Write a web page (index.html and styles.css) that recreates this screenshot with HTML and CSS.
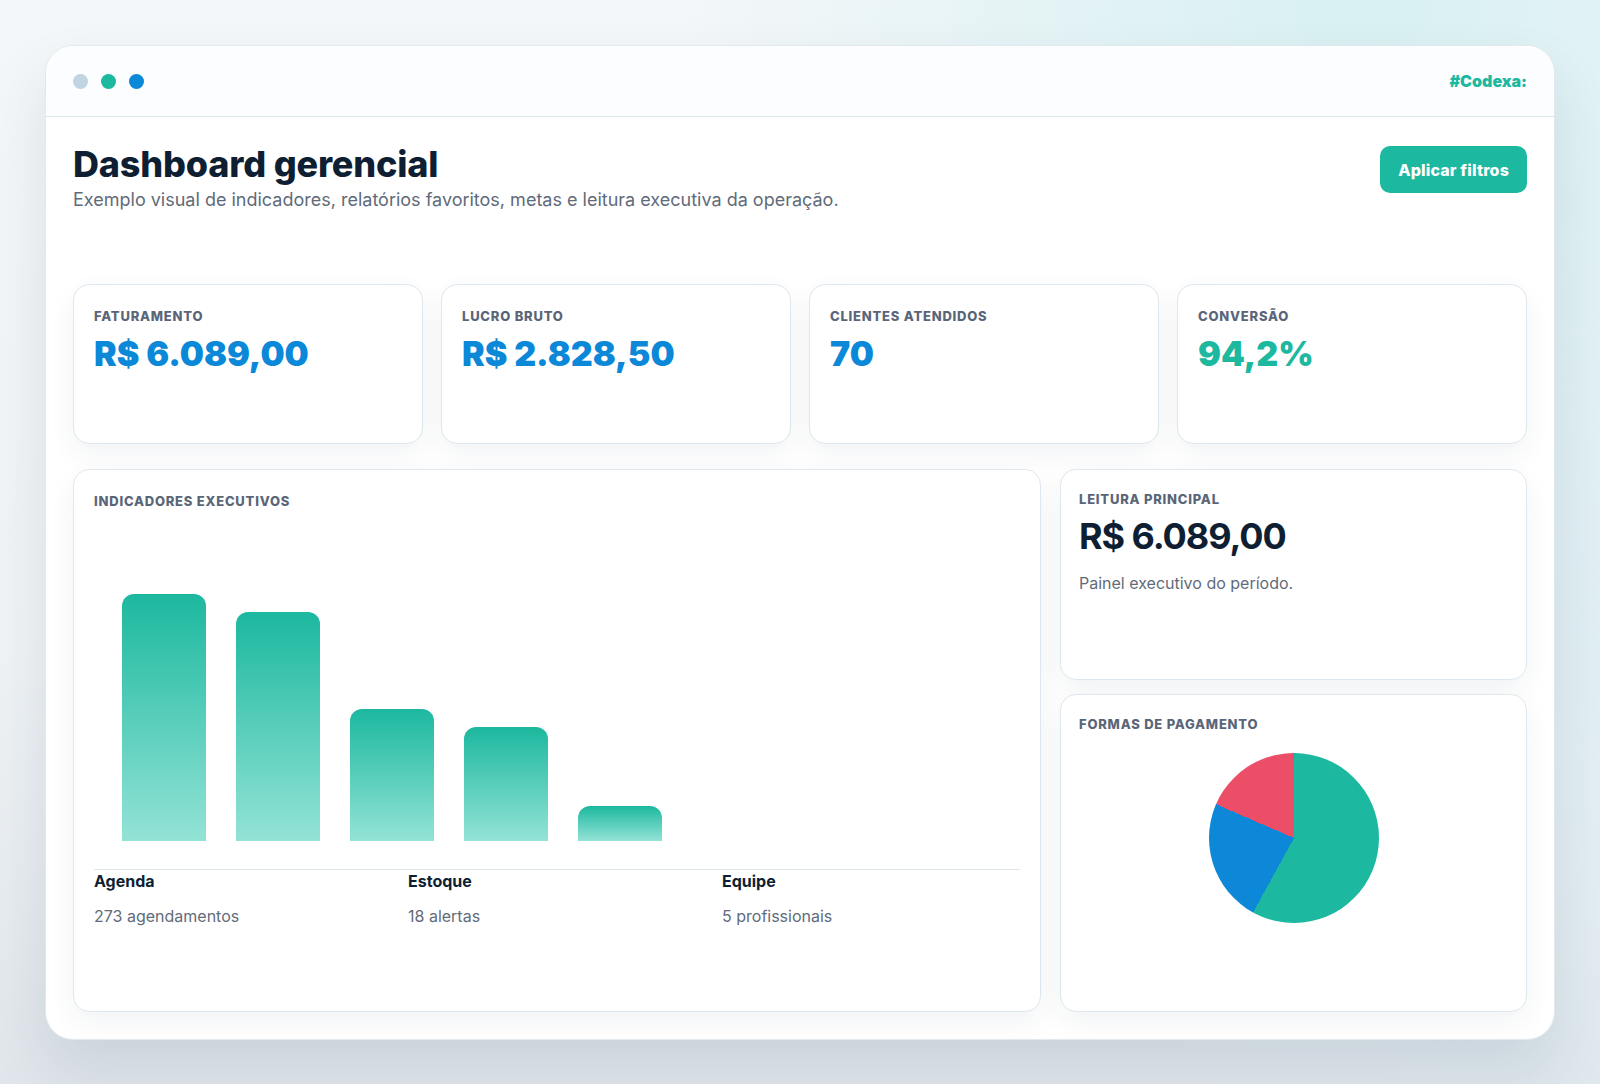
FILE: index.html
```html
<!DOCTYPE html>
<html>
  <head>
    <title>Dashboard gerencial</title>
    <link rel="stylesheet" href="styles.css">
  </head>
  <body>
    <div class="window">
      <div class="titlebar">
        <div class="dots">
          <span class="dot dot-gray"></span>
          <span class="dot dot-teal"></span>
          <span class="dot dot-blue"></span>
        </div>
        <span class="brand">#Codexa:</span>
      </div>

      <div class="content">
        <div class="page-head">
          <div>
            <h1>Dashboard gerencial</h1>
            <p class="subtitle">Exemplo visual de indicadores, relatórios favoritos, metas e leitura executiva da operação.</p>
          </div>
          <button class="btn-primary">Aplicar filtros</button>
        </div>

        <div class="kpis">
          <div class="card kpi">
            <span class="label">Faturamento</span>
            <strong class="kpi-value">R$ 6.089,00</strong>
          </div>
          <div class="card kpi">
            <span class="label">Lucro bruto</span>
            <strong class="kpi-value">R$ 2.828,50</strong>
          </div>
          <div class="card kpi">
            <span class="label">Clientes atendidos</span>
            <strong class="kpi-value">70</strong>
          </div>
          <div class="card kpi">
            <span class="label">Conversão</span>
            <strong class="kpi-value kpi-teal">94,2%</strong>
          </div>
        </div>

        <div class="main-grid">
          <div class="card chart-card">
            <span class="label">Indicadores executivos</span>
            <div class="bars">
              <div class="bar" style="height: 247px"></div>
              <div class="bar" style="height: 229px"></div>
              <div class="bar" style="height: 132px"></div>
              <div class="bar" style="height: 114px"></div>
              <div class="bar" style="height: 35px"></div>
            </div>
            <div class="summary">
              <div class="summary-item">
                <strong>Agenda</strong>
                <p>273 agendamentos</p>
              </div>
              <div class="summary-item">
                <strong>Estoque</strong>
                <p>18 alertas</p>
              </div>
              <div class="summary-item">
                <strong>Equipe</strong>
                <p>5 profissionais</p>
              </div>
            </div>
          </div>

          <div class="side">
            <div class="card side-card reading">
              <span class="label">Leitura principal</span>
              <strong class="reading-value">R$ 6.089,00</strong>
              <p class="muted">Painel executivo do período.</p>
            </div>
            <div class="card side-card payments">
              <span class="label">Formas de pagamento</span>
              <div class="pie"></div>
            </div>
          </div>
        </div>
      </div>
    </div>
  </body>
</html>
```

FILE: styles.css
```css
* {
  box-sizing: border-box;
}

body {
  margin: 0;
  padding: 45px;
  min-height: 100vh;
  font-family: Inter, "Noto Sans", sans-serif;
  color: #0f1f33;
  background:
    radial-gradient(circle at 85% 0%, rgba(206, 238, 240, 0.75), rgba(206, 238, 240, 0) 40%),
    radial-gradient(circle at 100% 60%, rgba(222, 238, 243, 0.8), rgba(222, 238, 243, 0) 35%),
    linear-gradient(180deg, #f4f7f9 0%, #eff3f6 60%, #e0e6eb 100%);
}

.window {
  background: #fff;
  border: 1px solid #e1e9ee;
  border-radius: 28px;
  overflow: hidden;
  box-shadow: 0 30px 60px rgba(20, 45, 70, 0.11);
}

.titlebar {
  height: 71px;
  display: flex;
  align-items: center;
  justify-content: space-between;
  padding: 0 27px;
  background: #fbfdfe;
  border-bottom: 1px solid #dfe8ed;
}

.dots {
  display: flex;
  gap: 13px;
}

.dot {
  width: 15px;
  height: 15px;
  border-radius: 50%;
}

.dot-gray {
  background: #c0d4e2;
}

.dot-teal {
  background: #1cb89f;
}

.dot-blue {
  background: #0b88d8;
}

.brand {
  color: #1cb89f;
  font-weight: 900;
  font-size: 16px;
}

.content {
  padding: 27px 27px 27px;
}

.page-head {
  display: flex;
  justify-content: space-between;
  align-items: flex-start;
  margin-bottom: 71px;
}

h1 {
  margin: 0;
  font-size: 36px;
  line-height: 1.15;
  font-weight: 800;
  letter-spacing: -0.005em;
  color: #0f1f33;
}

.subtitle {
  margin: 1px 0 0;
  font-size: 18px;
  line-height: 1.5;
  color: #5f6b7a;
}

.btn-primary {
  margin-top: 2px;
  height: 47px;
  padding: 0 18px;
  border: 0;
  border-radius: 10px;
  background: #1cb89f;
  color: #fff;
  font-family: inherit;
  font-size: 16px;
  font-weight: 800;
  letter-spacing: 0.01em;
}

.card {
  background: #fff;
  border: 1px solid #dfe8ee;
  border-radius: 16px;
  box-shadow: 0 10px 28px rgba(20, 45, 70, 0.06);
}

.label {
  display: block;
  font-size: 13px;
  line-height: 1.4;
  font-weight: 800;
  letter-spacing: 0.06em;
  text-transform: uppercase;
  color: #5a6678;
}

.kpis {
  display: grid;
  grid-template-columns: repeat(4, minmax(0, 1fr));
  gap: 18px;
  margin-bottom: 25px;
}

.kpi {
  height: 160px;
  padding: 22px 20px;
}

.kpi-value {
  display: block;
  margin-top: 8px;
  font-size: 34px;
  line-height: 1.2;
  font-weight: 900;
  letter-spacing: 0;
  color: #0b88d8;
}

.kpi-teal {
  color: #1cb89f;
}

.main-grid {
  display: grid;
  grid-template-columns: minmax(0, 1fr) 467px;
  gap: 19px;
}

.chart-card {
  height: 543px;
  padding: 22px 20px;
}

.bars {
  height: 330px;
  display: flex;
  align-items: flex-end;
  gap: 30px;
  padding: 0 28px;
  margin-bottom: 28px;
}

.bar {
  width: 84px;
  border-radius: 12px 12px 0 0;
  background: linear-gradient(180deg, #1cb89f 0%, #93e3d6 100%);
}

.summary {
  display: grid;
  grid-template-columns: repeat(3, minmax(0, 1fr));
  gap: 16px;
  border-top: 1px solid #dde6eb;
}

.summary-item strong {
  display: block;
  font-size: 16px;
  line-height: 1.4;
  font-weight: 700;
  color: #0f1f33;
}

.summary-item p {
  margin: 12px 0 0;
  font-size: 16px;
  line-height: 1.5;
  color: #5f6b7a;
}

.side {
  display: flex;
  flex-direction: column;
  gap: 14px;
}

.side-card {
  padding: 20px 18px;
}

.reading {
  height: 211px;
}

.reading-value {
  display: block;
  margin-top: 6px;
  font-size: 36px;
  line-height: 1.2;
  font-weight: 700;
  letter-spacing: -0.03em;
  color: #0f1f33;
}

.muted {
  margin: 13px 0 0;
  font-size: 16px;
  line-height: 1.5;
  color: #5f6b7a;
}

.payments {
  height: 318px;
}

.pie {
  width: 170px;
  height: 170px;
  margin: 19px auto 0;
  border-radius: 50%;
  background: conic-gradient(#1cb89f 0 58%, #0d88d8 58% 81.5%, #ec4d67 81.5% 100%);
}
```
